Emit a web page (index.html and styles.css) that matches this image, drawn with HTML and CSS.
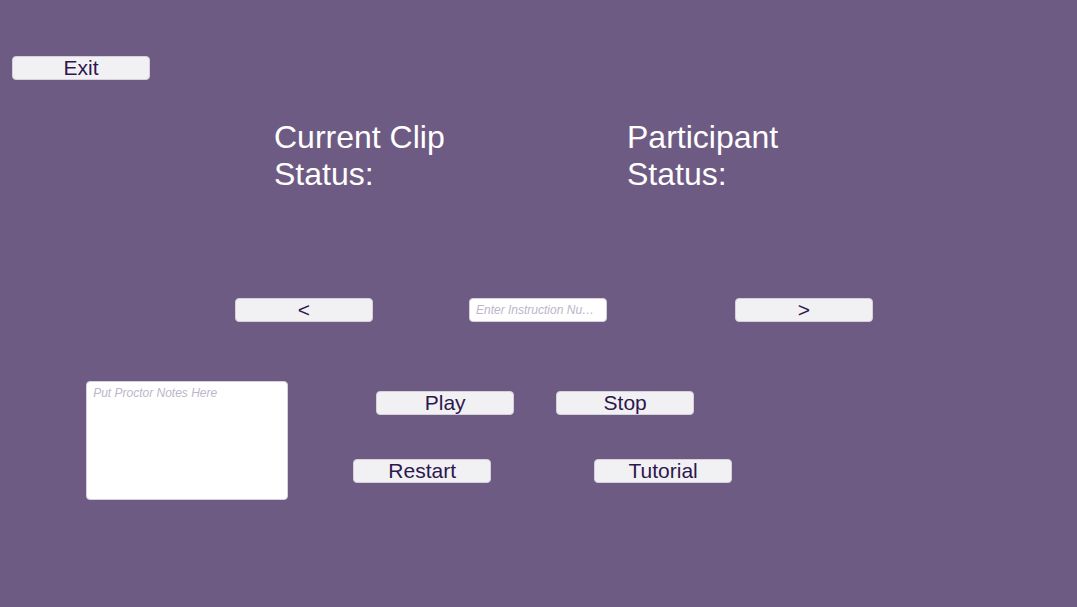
FILE: index.html
```html
<!DOCTYPE html>
<html lang="en">
<head>
<meta charset="utf-8">
<meta name="viewport" content="width=device-width, initial-scale=1">
<title>Proctor Panel</title>
<link rel="stylesheet" href="styles.css">
</head>
<body>
<main class="panel">
  <header class="topbar">
    <button class="button" type="button">Exit</button>
  </header>
  <section class="statuses">
    <h2 class="status clip-status">Current Clip<br>Status:</h2>
    <h2 class="status participant-status">Participant<br>Status:</h2>
  </section>
  <section class="instruction-nav">
    <button class="button previous" type="button" aria-label="Previous instruction">&lt;</button>
    <input class="field number-field" type="text" aria-label="Instruction number" placeholder="Enter Instruction Number...">
    <button class="button next" type="button" aria-label="Next instruction">&gt;</button>
  </section>
  <section class="lower">
    <textarea class="field notes" aria-label="Proctor notes" placeholder="Put Proctor Notes Here"></textarea>
    <div class="playback">
      <div class="row row-play">
        <button class="button" type="button">Play</button>
        <button class="button" type="button">Stop</button>
      </div>
      <div class="row row-restart">
        <button class="button" type="button">Restart</button>
        <button class="button" type="button">Tutorial</button>
      </div>
    </div>
  </section>
</main>
</body>
</html>
```
FILE: styles.css
```css
* {
  box-sizing: border-box;
}

body {
  margin: 0;
  min-height: 100vh;
  background: #6e5b83;
  color: #fff;
  font-family: "Liberation Sans", Arial, sans-serif;
}

.panel {
  padding: 56px 0;
}

.topbar {
  padding: 0 12px;
}

.button,
.field {
  width: 138px;
  height: 24px;
  margin: 0;
  border: 1px solid #d5d0dc;
  border-radius: 4px;
  font-family: inherit;
}

.button {
  display: block;
  padding: 0;
  background: #f1f1f4;
  color: #2e174f;
  font-size: 21px;
  line-height: 22px;
  text-align: center;
}

.field {
  padding: 0 6px;
  background: #fff;
  color: #2e174f;
  font-size: 12px;
  text-overflow: ellipsis;
}

.field::placeholder {
  color: #bdb5c9;
  font-style: italic;
  opacity: 1;
}

.statuses {
  display: grid;
  grid-template-columns: 274fr 353fr 450fr;
  margin-top: 39px;
}

.status {
  margin: 0;
  font-size: 32px;
  font-weight: 400;
  line-height: 37px;
  white-space: nowrap;
}

.clip-status {
  grid-column: 2;
}

.participant-status {
  grid-column: 3;
}

.instruction-nav {
  display: grid;
  grid-template-columns: 235fr 138px 96fr 138px 128fr 138px 204fr;
  margin-top: 105px;
}

.previous {
  grid-column: 2;
}

.number-field {
  grid-column: 4;
}

.next {
  grid-column: 6;
}

.lower {
  display: grid;
  grid-template-columns: 8% 202px 1fr;
  margin-top: 59px;
}

.notes {
  display: block;
  grid-column: 2;
  width: 100%;
  height: 119px;
  padding: 4px 6px;
  resize: none;
}

.playback {
  display: flex;
  flex-direction: column;
  gap: 44px;
  padding-top: 10px;
}

.row {
  display: flex;
}

.row-play {
  gap: 42px;
  padding-left: 88px;
}

.row-restart {
  gap: 103px;
  padding-left: 65px;
}
```
